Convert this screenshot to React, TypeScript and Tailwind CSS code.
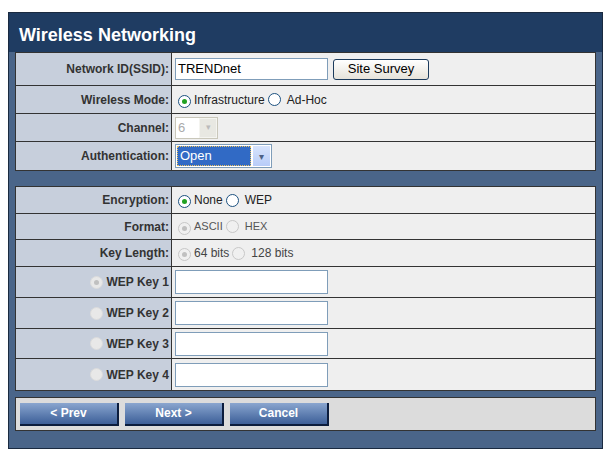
import React from "react";

const Radio = ({ checked = false, disabled = false, faint = false }: { checked?: boolean; disabled?: boolean; faint?: boolean }) => (
  <span
    className={`inline-flex items-center justify-center w-[13px] h-[13px] rounded-full border ${
      faint ? "border-[#dcdcdc] bg-[#e8e8e8]" : disabled ? "border-[#c8c8c8] bg-[#f0f0f0]" : "border-[#1c5180] bg-white"
    }`}
  >
    {checked && <span className={`w-[5px] h-[5px] rounded-full ${disabled || faint ? "bg-[#c0c0c0]" : "bg-[#21a121]"}`} />}
  </span>
);

const Row = ({ label, h, children, labelNode }: { label?: string; h: string; children: React.ReactNode; labelNode?: React.ReactNode }) => (
  <div className={`flex ${h} border-b border-[#333] last:border-b-0`}>
    <div className="w-[156px] shrink-0 bg-[#c7cfdc] border-r border-[#333] flex items-center justify-end pr-[2px] font-bold text-[12px] text-[#333]">
      {labelNode ?? label}
    </div>
    <div className="flex-1 bg-[#efefef] flex items-center pl-[3px] gap-[3px] text-[12px] text-[#222]">{children}</div>
  </div>
);

const TextBox = () => <div className="w-[153px] h-[24px] bg-white border border-[#7f9db9]" />;

const Btn = ({ t }: { t: string }) => (
  <div className="w-[99px] h-[23px] flex items-center justify-center text-white font-bold text-[12px] bg-gradient-to-b from-[#8aa6cf] to-[#3d5f98] border-r-2 border-b-2 border-[#0c1d3d]">
    {t}
  </div>
);

export default function App() {
  return (
    <div className="w-[610px] h-[465px] bg-white pt-[12px] pl-[8px]" style={{ fontFamily: '"Liberation Sans", Arial, sans-serif' }}>
      <div className="w-[595px] h-[437px] bg-[#4a6589] border border-[#1a2a40] flex flex-col">
        <div className="h-[39px] bg-[#1f3c62] flex items-center pl-[10px] pt-[6px] text-white font-bold text-[18px]">Wireless Networking</div>
        <div className="mx-[6px] border border-[#333] flex flex-col">
          <Row label="Network ID(SSID):" h="h-[33px]">
            <div className="w-[153px] h-[22px] bg-white border border-[#7f9db9] flex items-center pl-[2px] text-[13px] text-black">TRENDnet</div>
            <div className="w-[96px] h-[21px] ml-[2px] rounded-[3px] border border-[#1c3b5c] bg-gradient-to-b from-white to-[#e6e3da] flex items-center justify-center text-[13px] text-black">Site Survey</div>
          </Row>
          <Row label="Wireless Mode:" h="h-[28px]">
            <span className="ml-[3px]"><Radio checked /></span><span>Infrastructure</span><Radio /><span className="ml-[3px]">Ad-Hoc</span>
          </Row>
          <Row label="Channel:" h="h-[28px]">
            <div className="w-[43px] h-[22px] border border-[#c9c7ba] bg-[#f4f4f0] flex items-center">
              <div className="w-[23px] h-[20px] bg-white text-[#aaa] text-[13px] pl-[2px] flex items-center">6</div>
              <div className="w-[16px] h-[18px] ml-[1px] bg-[#e8e8e2] text-[#bbb] text-[9px] flex items-center justify-center">▾</div>
            </div>
          </Row>
          <Row label="Authentication:" h="h-[28px]">
            <div className="w-[97px] h-[24px] border border-[#7f9db9] bg-white flex items-center p-[1px]">
              <div className="w-[74px] h-[20px] bg-[#316ac5] border border-dotted border-[#e8c060] text-white text-[13px] pl-[2px] flex items-center">Open</div>
              <div className="w-[17px] h-[20px] ml-[2px] bg-gradient-to-b from-[#d8e4fc] to-[#b8ccf8] text-[#4d6185] text-[10px] flex items-center justify-center">▾</div>
            </div>
          </Row>
        </div>
        <div className="h-[15px]" />
        <div className="mx-[6px] border border-[#333] flex flex-col">
          <Row label="Encryption:" h="h-[27px]">
            <span className="ml-[3px]"><Radio checked /></span><span>None</span><Radio /><span className="ml-[3px]">WEP</span>
          </Row>
          <Row label="Format:" h="h-[26px]">
            <span className="ml-[3px]"><Radio checked disabled /></span><span className="text-[11px] text-[#555]">ASCII</span><Radio disabled /><span className="ml-[3px] text-[11px] text-[#555]">HEX</span>
          </Row>
          <Row label="Key Length:" h="h-[27px]">
            <span className="ml-[3px]"><Radio checked disabled /></span><span className="text-[#444]">64 bits</span><Radio disabled /><span className="ml-[3px] text-[#444]">128 bits</span>
          </Row>
          {[1, 2, 3, 4].map((n) => (
            <Row
              key={n}
              h={n === 3 ? "h-[30px]" : "h-[31px]"}
              labelNode={
                <span className="flex items-center gap-[3px]">
                  <Radio checked={n === 1} faint />
                  <span className="ml-[1px]">WEP Key {n}</span>
                </span>
              }
            >
              <TextBox />
            </Row>
          ))}
        </div>
        <div className="mx-[6px] mt-[6px] h-[34px] border border-[#333] bg-[#dcdcdc] flex items-center gap-[6px] pl-[4px]">
          <Btn t="< Prev" />
          <Btn t="Next >" />
          <Btn t="Cancel" />
        </div>
      </div>
    </div>
  );
}
